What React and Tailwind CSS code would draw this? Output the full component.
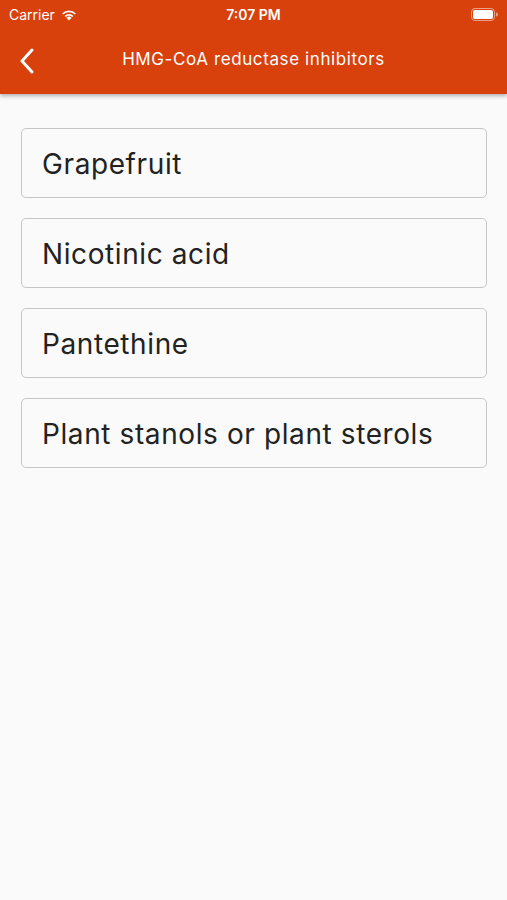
export default function App() {
  const items = ["Grapefruit", "Nicotinic acid", "Pantethine", "Plant stanols or plant sterols"];
  return (
    <div className="w-[507px] h-[900px] bg-[#fafafa] flex flex-col" style={{ fontFamily: "Inter, 'Noto Sans', sans-serif" }}>
      <div className="bg-[#d8400c] shadow-[0_2px_4px_rgba(0,0,0,0.3)] relative z-10">
        <div className="h-[28px] flex items-center justify-between px-[9px] text-white text-[14px]" style={{ fontFamily: "Inter, 'Liberation Sans', sans-serif" }}>
          <div className="flex items-center gap-[5px] w-[120px]">
            <span>Carrier</span>
            <svg width="18" height="13" viewBox="0 0 16 12" fill="white">
              <path d="M8 11.5 L5.6 9 A3.4 3.4 0 0 1 10.4 9 Z" />
              <path d="M3.9 7.3 A5.8 5.8 0 0 1 12.1 7.3 L11 8.4 A4.3 4.3 0 0 0 5 8.4 Z" />
              <path d="M1.6 5 A9 9 0 0 1 14.4 5 L13.3 6.1 A7.5 7.5 0 0 0 2.7 6.1 Z" />
            </svg>
          </div>
          <span className="font-semibold">7:07 PM</span>
          <div className="w-[120px] flex justify-end">
            <svg width="27" height="13" viewBox="0 0 27 13">
              <rect x="0.5" y="0.5" width="23" height="12" rx="3.5" fill="none" stroke="white" strokeOpacity="0.5" />
              <rect x="2" y="2" width="20" height="9" rx="2" fill="white" />
              <path d="M25 4.5 A2 2 0 0 1 25 8.5 Z" fill="white" fillOpacity="0.5" />
            </svg>
          </div>
        </div>
        <div className="h-[66px] flex items-center relative">
          <svg className="absolute left-[19px] top-[20px]" width="16" height="26" viewBox="0 0 16 26" fill="none" stroke="white" strokeWidth="3" strokeLinecap="round" strokeLinejoin="round">
            <path d="M13 2 L3 13 L13 24" />
          </svg>
          <div className="w-full text-center text-white text-[17px] tracking-[0.6px] pb-[2px]">HMG-CoA reductase inhibitors</div>
        </div>
      </div>
      <div className="flex flex-col gap-[20px] pl-[21px] pr-[20px] pt-[34px]">
        {items.map((t) => (
          <div key={t} className="h-[70px] border-[1.5px] border-[#c6c6c6] rounded-[5px] flex items-center pl-[20px] pt-[2px] text-[28px] tracking-[0.6px] text-[#222]">
            {t}
          </div>
        ))}
      </div>
    </div>
  );
}
